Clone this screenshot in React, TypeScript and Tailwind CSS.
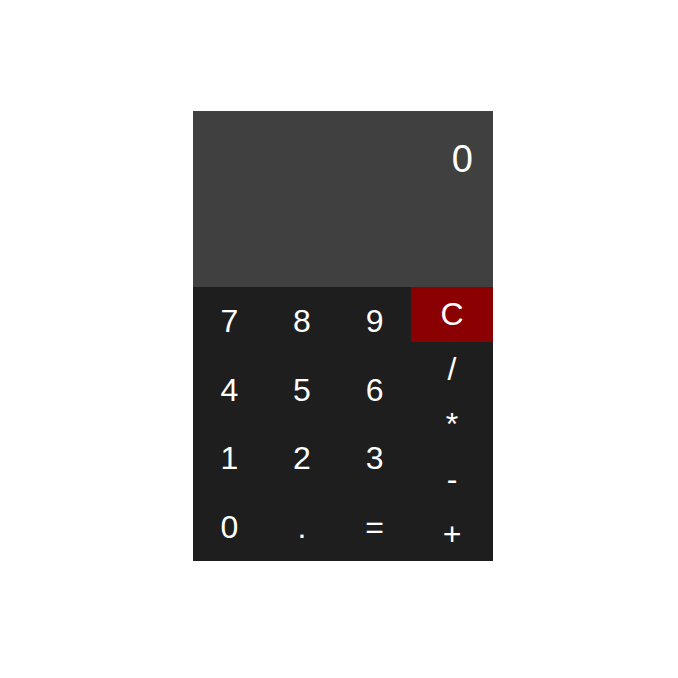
export default function App() {
  const rows = [
    ['7', '8', '9'],
    ['4', '5', '6'],
    ['1', '2', '3'],
    ['0', '.', '='],
  ]
  const ops = ['/', '*', '-', '+']

  return (
    <div
      className="w-[678px] h-[678px] bg-white flex items-center justify-center pl-2 pb-[6px]"
      style={{ fontFamily: '"Liberation Sans", Arial, sans-serif' }}
    >
      <div className="w-[300px] flex flex-col">
        {/* display */}
        <div className="h-[176px] bg-[#404040] text-white text-right text-[38px] pr-5 pt-5 leading-normal">
          0
        </div>

        {/* keypad */}
        <div className="flex bg-[#1e1e1e] text-white text-[32px]">
          <div className="flex-1 grid grid-cols-3 grid-rows-4">
            {rows.flat().map((k) => (
              <button
                key={k}
                type="button"
                className="flex items-center justify-center h-[68.5px] leading-none"
              >
                {k}
              </button>
            ))}
          </div>
          <div className="w-[82px] flex flex-col">
            <button
              type="button"
              className="h-[54.8px] bg-[#8b0000] flex items-center justify-center leading-none"
            >
              C
            </button>
            {ops.map((op) => (
              <button
                key={op}
                type="button"
                className="h-[54.8px] flex items-center justify-center leading-none"
              >
                {op}
              </button>
            ))}
          </div>
        </div>
      </div>
    </div>
  )
}
